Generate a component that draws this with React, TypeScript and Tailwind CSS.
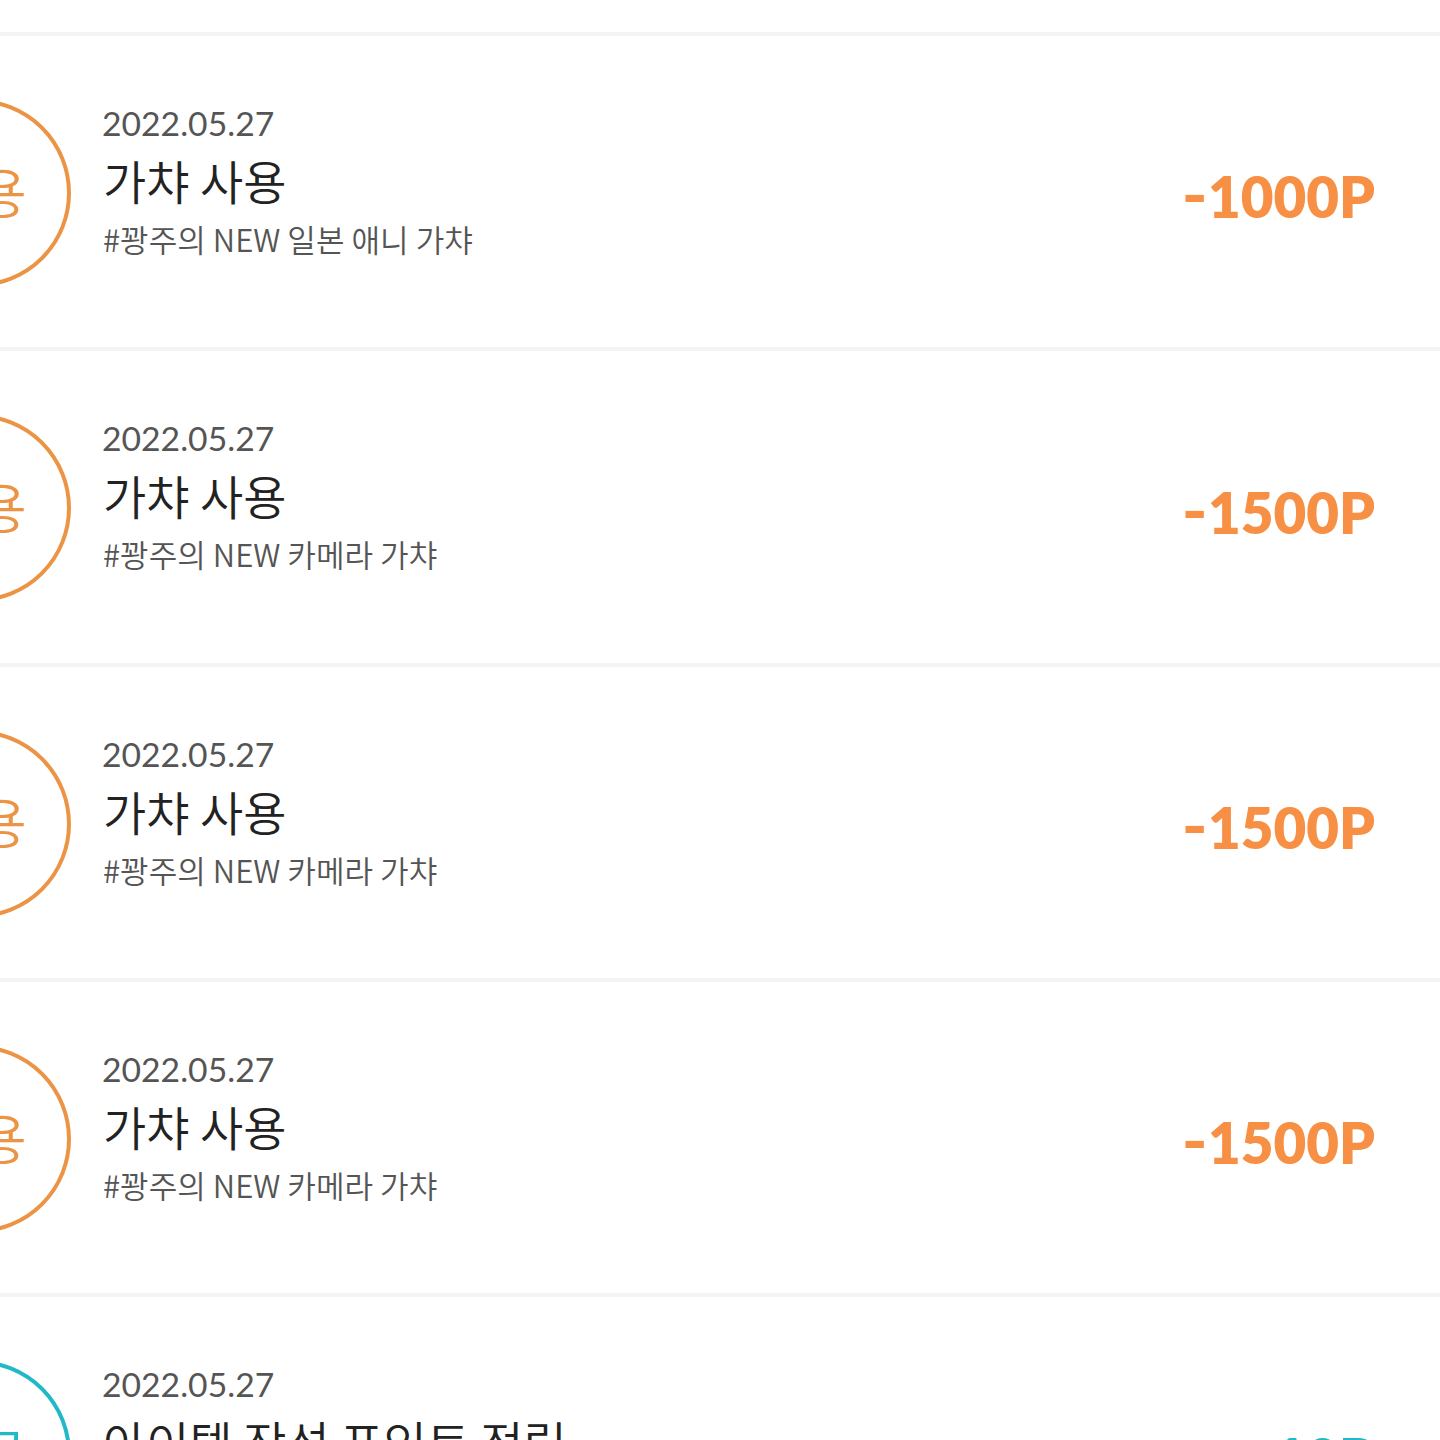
const rows = [
  { amount: "1000P", sub: "#꽝주의 NEW 일본 애니 가챠" },
  { amount: "1500P", sub: "#꽝주의 NEW 카메라 가챠" },
  { amount: "1500P", sub: "#꽝주의 NEW 카메라 가챠" },
  { amount: "1500P", sub: "#꽝주의 NEW 카메라 가챠" },
];

const font = "font-['Lato','Noto_Sans_CJK_KR',sans-serif]";

function Row({ amount, sub }: { amount: string; sub: string }) {
  return (
    <div className="flex h-[315.33px] items-center border-t-4 border-[#f3f4f5] pr-[65px]">
      <div className="mt-[3px] -ml-[117px] flex h-[188px] w-[188px] shrink-0 items-center justify-center rounded-full border-4 border-[#ec9445] text-[54px] font-[350] whitespace-nowrap text-[#ec9445]">
        사용
      </div>
      <div className="ml-[32px] flex flex-1 flex-col pb-[20px]">
        <div className="-ml-px text-[33.7px] leading-[40px] text-[#555555]">2022.05.27</div>
        <div className="mt-[5px] font-['Noto_Sans_CJK_KR',sans-serif] text-[47px] leading-[64px] font-[350] text-[#222222]">가챠 사용</div>
        <div className="mt-[6px] font-['Noto_Sans_CJK_KR',sans-serif] text-[31.1px] leading-[42px] font-[350] text-[#555555]">{sub}</div>
      </div>
      <div className="mt-[10px] text-[56.5px] leading-none font-extrabold text-[#f79044]">
        <span className="mr-[5px] inline-block origin-left -translate-y-[2px] scale-x-[1.2]">-</span>
        {amount}
      </div>
    </div>
  );
}

export default function App() {
  return (
    <div className={`h-[1440px] w-[1440px] overflow-hidden bg-white pt-[32px] ${font}`}>
      {rows.map((r, i) => (
        <Row key={i} {...r} />
      ))}
      <div className="flex h-[315.33px] items-center border-t-4 border-[#f3f4f5] pr-[65px]">
        <div className="mt-[3px] -ml-[117px] flex h-[188px] w-[188px] shrink-0 items-center justify-center rounded-full border-4 border-[#22b9c6] text-[54px] font-[350] whitespace-nowrap text-[#22b9c6]">
          지급
        </div>
        <div className="ml-[32px] flex flex-1 flex-col pb-[20px]">
          <div className="-ml-px text-[33.7px] leading-[40px] text-[#555555]">2022.05.27</div>
          <div className="mt-[5px] font-['Noto_Sans_CJK_KR',sans-serif] text-[47px] leading-[64px] font-[350] text-[#222222]">아이템 작성 포인트 적립</div>
          <div className="mt-[6px] text-[31.1px] leading-[42px]">&nbsp;</div>
        </div>
        <div className="mt-[10px] text-[56.5px] leading-none font-extrabold text-[#22b9c6]">+10P</div>
      </div>
    </div>
  );
}
